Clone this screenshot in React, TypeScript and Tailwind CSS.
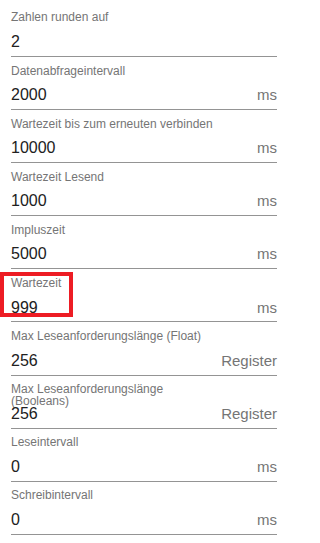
const fields: { label: string; value: string; unit?: string; marked?: boolean }[] = [
  { label: 'Zahlen runden auf', value: '2' },
  { label: 'Datenabfrageintervall', value: '2000', unit: 'ms' },
  { label: 'Wartezeit bis zum erneuten verbinden', value: '10000', unit: 'ms' },
  { label: 'Wartezeit Lesend', value: '1000', unit: 'ms' },
  { label: 'Impluszeit', value: '5000', unit: 'ms' },
  { label: 'Wartezeit', value: '999', unit: 'ms', marked: true },
  { label: 'Max Leseanforderungslänge (Float)', value: '256', unit: 'Register' },
  { label: 'Max Leseanforderungslänge (Booleans)', value: '256', unit: 'Register' },
  { label: 'Leseintervall', value: '0', unit: 'ms' },
  { label: 'Schreibintervall', value: '0', unit: 'ms' },
]

function Field({ label, value, unit, marked }: (typeof fields)[number]) {
  return (
    <div className="relative flex h-[53.1px] w-[266px] flex-col border-b border-[#949494] pt-[8.6px]">
      {marked && (
        <div className="pointer-events-none absolute left-[-11px] top-[2.6px] h-[45px] w-[73px] border-4 border-[#ed1c24]" />
      )}
      <div className="h-[12px] max-w-[205px] text-[12px] leading-[11.6px] text-[#757575]">
        {label}
      </div>
      <div className="mt-[7.6px] flex h-[19px] items-baseline justify-between leading-[19px]">
        <span className="text-[16px] text-[#212121]">{value}</span>
        {unit && <span className="text-[15px] text-[#757575]">{unit}</span>}
      </div>
    </div>
  )
}

export default function App() {
  return (
    <div
      className="min-h-[543px] w-[300px] bg-white pl-[11px] pt-[3.9px]"
      style={{ fontFamily: '"Liberation Sans", Arial, sans-serif' }}
    >
      {fields.map((f) => (
        <Field key={f.label} {...f} />
      ))}
    </div>
  )
}
